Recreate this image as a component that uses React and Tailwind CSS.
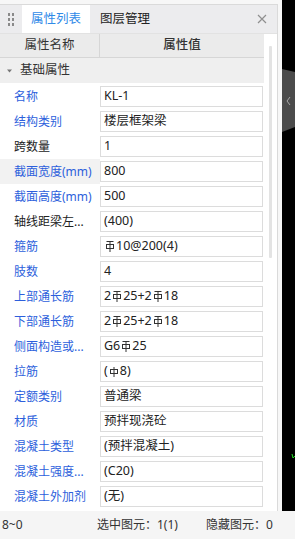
import React from "react";

const BLUE = "text-[#2d5fdc]";

function Rebar({ bar = true }) {
  return (
    <svg width="10" height="13" viewBox="0 0 10 13" className="inline-block align-[-2px] mx-[1px]">
      {bar && <line x1="1.5" y1="1.5" x2="8.5" y2="1.5" stroke="#333" strokeWidth="1" />}
      <rect x="1.5" y="4.5" width="7" height="4" fill="none" stroke="#333" strokeWidth="1" />
      <line x1="5" y1={bar ? 1.5 : 2} x2="5" y2="12" stroke="#333" strokeWidth="1" />
    </svg>
  );
}

const rows = [
  { k: "名称", v: "KL-1" },
  { k: "结构类别", v: "楼层框架梁" },
  { k: "跨数量", v: "1", black: true },
  { k: "截面宽度(mm)", v: "800", hover: true },
  { k: "截面高度(mm)", v: "500" },
  { k: "轴线距梁左...", v: "(400)", black: true },
  { k: "箍筋", v: <><Rebar />10@200(4)</> },
  { k: "肢数", v: "4" },
  { k: "上部通长筋", v: <>2<Rebar />25+2<Rebar />18</> },
  { k: "下部通长筋", v: <>2<Rebar />25+2<Rebar />18</> },
  { k: "侧面构造或...", v: <>G6<Rebar />25</> },
  { k: "拉筋", v: <>(<Rebar bar={false} />8)</> },
  { k: "定额类别", v: "普通梁" },
  { k: "材质", v: "预拌现浇砼" },
  { k: "混凝土类型", v: "(预拌混凝土)" },
  { k: "混凝土强度...", v: "(C20)" },
  { k: "混凝土外加剂", v: "(无)" },
];

export default function App() {
  return (
    <div
      className="w-[295px] h-[539px] flex flex-col overflow-hidden text-[12px] text-[#333] bg-white"
      style={{ fontFamily: '"Noto Sans", "Noto Sans CJK SC", sans-serif' }}
    >
      <div className="flex h-[511px]">
        {/* Left panel */}
        <div className="w-[282px] pr-[4px] pt-[4px] bg-[#f7f7f7]">
          <div className="w-[278px] h-full flex flex-col border-r border-t border-[#dadada] bg-white">
            {/* Tab bar */}
            <div className="h-[29px] flex items-stretch bg-[#ececee] border-b border-[#e2e2e2]">
              <div className="w-[22px] flex items-center justify-center">
                <div className="grid grid-cols-2 gap-x-[2px] gap-y-[2px]">
                  {Array.from({ length: 6 }).map((_, i) => (
                    <div key={i} className="w-[2px] h-[3px] bg-[#8a8a8a]" />
                  ))}
                </div>
              </div>
              <div className="w-[68px] bg-white flex items-center justify-center text-[12.5px] text-[#2f8ae8]">
                属性列表
              </div>
              <div className="pl-[10px] flex items-center text-[12.5px] text-[#222]">图层管理</div>
              <div className="flex-1" />
              <div className="w-[20px] mr-[5px] flex items-center justify-center">
                <svg width="10" height="10" viewBox="0 0 10 10">
                  <path d="M1 1L9 9M9 1L1 9" stroke="#8f8f8f" strokeWidth="1.2" />
                </svg>
              </div>
            </div>
            {/* Body */}
            <div className="flex flex-1 min-h-0">
              <div className="w-[264px] flex flex-col">
                <div className="h-[24px] flex bg-[#ebebeb] border-b border-[#d6d6d6] text-[12.5px] text-[#333]">
                  <div className="w-[100px] border-r border-[#d6d6d6] flex items-center justify-center">属性名称</div>
                  <div className="flex-1 flex items-center justify-center font-medium">属性值</div>
                </div>
                <div className="h-[25px] flex items-center bg-[#efefef] text-[12.5px]">
                  <svg width="20" height="10" viewBox="0 0 20 10">
                    <path d="M7 3.5L12 3.5L9.5 6.5Z" fill="#777" />
                  </svg>
                  <span>基础属性</span>
                </div>
                <div className="h-[1px]" />
                {rows.map((r, i) => (
                  <div key={i} className="h-[25px] flex">
                    <div
                      className={`w-[100px] pl-[14px] flex items-center whitespace-nowrap text-[12px] ${
                        r.black ? "text-[#222]" : BLUE
                      } ${r.hover ? "bg-[#f2f2f2]" : ""}`}
                    >
                      {r.k}
                    </div>
                    <div className="w-[164px] pt-[2px] pb-[2px] pr-[1px]">
                      <div className="h-[21px] border border-[#dcdcdc] pl-[3px] flex items-center text-[12.5px] text-[#222] whitespace-nowrap overflow-hidden">
                        {r.v}
                      </div>
                    </div>
                  </div>
                ))}
              </div>
              {/* Scrollbar */}
              <div className="w-[13px] pl-[5px] pt-[12px]">
                <div className="w-[3px] h-[212px] rounded-[1px] bg-[#e3e3e3]" />
              </div>
            </div>
          </div>
        </div>
        {/* Canvas */}
        <div className="w-[13px] h-full bg-black">
          <svg width="13" height="511" viewBox="0 0 13 511">
            <path d="M0 69L13 72L13 127L0 132Z" fill="#4b4b4b" />
            <path d="M8 97L5 101L8 105" fill="none" stroke="#a8a8a8" strokeWidth="1" />
            <path d="M10 454L11 458L13 456" fill="none" stroke="#21e021" strokeWidth="1" />
          </svg>
        </div>
      </div>
      {/* Status bar */}
      <div className="h-[28px] flex items-center bg-[#f5f5f5] text-[12px] text-[#333]">
        <span className="pl-[2px] w-[97px]">8~0</span>
        <span className="w-[109px]">选中图元：1(1)</span>
        <span>隐藏图元：0</span>
      </div>
    </div>
  );
}
